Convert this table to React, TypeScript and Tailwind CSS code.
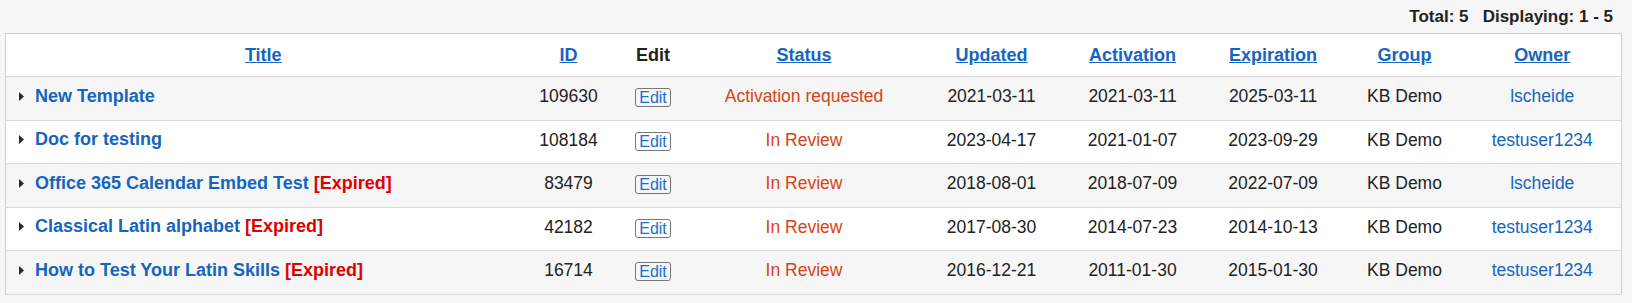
import React from 'react';

type Row = {
    title: string;
    expired?: boolean;
    id: string;
    status: string;
    updated: string;
    activation: string;
    expiration: string;
    group: string;
    owner: string;
};

const rows: Row[] = [
    { title: 'New Template', id: '109630', status: 'Activation requested', updated: '2021-03-11', activation: '2021-03-11', expiration: '2025-03-11', group: 'KB Demo', owner: 'lscheide' },
    { title: 'Doc for testing', id: '108184', status: 'In Review', updated: '2023-04-17', activation: '2021-01-07', expiration: '2023-09-29', group: 'KB Demo', owner: 'testuser1234' },
    { title: 'Office 365 Calendar Embed Test', expired: true, id: '83479', status: 'In Review', updated: '2018-08-01', activation: '2018-07-09', expiration: '2022-07-09', group: 'KB Demo', owner: 'lscheide' },
    { title: 'Classical Latin alphabet', expired: true, id: '42182', status: 'In Review', updated: '2017-08-30', activation: '2014-07-23', expiration: '2014-10-13', group: 'KB Demo', owner: 'testuser1234' },
    { title: 'How to Test Your Latin Skills', expired: true, id: '16714', status: 'In Review', updated: '2016-12-21', activation: '2011-01-30', expiration: '2015-01-30', group: 'KB Demo', owner: 'testuser1234' },
];

const headers = ['Title', 'ID', 'Edit', 'Status', 'Updated', 'Activation', 'Expiration', 'Group', 'Owner'];

function Caret() {
    return (
        <svg width="5" height="9" viewBox="0 0 5 9" className="shrink-0">
            <path d="M0 0 L5 4.5 L0 9 Z" fill="#2b2b2b" />
        </svg>
    );
}

export default function App() {
    return (
        <div className="min-h-screen bg-[#f6f6f6] pl-[5px] pr-[10px] font-['Liberation_Sans',Arial,sans-serif] text-[17.5px] text-[#222]">
            {/* paging summary */}
            <div className="h-[33px] flex items-center justify-end pr-[9px] text-[17px] font-bold whitespace-pre">
                Total: 5   Displaying: 1 - 5
            </div>

            <table className="w-full table-fixed border-collapse border border-[#cfcfcf] bg-white">
                <colgroup>
                    <col className="w-[515px]" />
                    <col className="w-[96px]" />
                    <col className="w-[73px]" />
                    <col className="w-[229px]" />
                    <col className="w-[146px]" />
                    <col className="w-[136px]" />
                    <col className="w-[145px]" />
                    <col className="w-[118px]" />
                    <col />
                </colgroup>
                <thead>
                    <tr className="h-[43px] border-b border-[#d9d9d9] text-[18px]">
                        {headers.map((h) =>
                            h === 'Edit' ? (
                                <th key={h} className="font-bold text-[#222] text-center">Edit</th>
                            ) : (
                                <th key={h} className="font-bold text-center">
                                    <a href="#" className="text-[#1565c0] underline">{h}</a>
                                </th>
                            )
                        )}
                    </tr>
                </thead>
                <tbody>
                    {rows.map((r, i) => (
                        <tr key={r.id} className={`h-[43.5px] border-b border-[#d9d9d9] ${i % 2 === 0 ? 'bg-[#f6f6f6]' : 'bg-white'}`}>
                            <td className="pl-[13px] pb-[4px]">
                                <div className="flex items-center gap-[11px]">
                                    <Caret />
                                    <span className="font-bold text-[18px] whitespace-nowrap">
                                        <a href="#" className="text-[#1565c0]">{r.title}</a>
                                        {r.expired && <span className="text-[#e00000]"> [Expired]</span>}
                                    </span>
                                </div>
                            </td>
                            <td className="text-center pb-[4px]">{r.id}</td>
                            <td className="text-center pb-[2px]">
                                <button className="border border-[#777] rounded-[3px] px-[3px] leading-[17px] text-[16px] text-[#1a6fcf] bg-transparent">Edit</button>
                            </td>
                            <td className="text-center pb-[4px] text-[#d84315]">{r.status}</td>
                            <td className="text-center pb-[4px]">{r.updated}</td>
                            <td className="text-center pb-[4px]">{r.activation}</td>
                            <td className="text-center pb-[4px]">{r.expiration}</td>
                            <td className="text-center pb-[4px]">{r.group}</td>
                            <td className="text-center pb-[4px]">
                                <a href="#" className="text-[#1565c0]">{r.owner}</a>
                            </td>
                        </tr>
                    ))}
                </tbody>
            </table>
        </div>
    );
}
